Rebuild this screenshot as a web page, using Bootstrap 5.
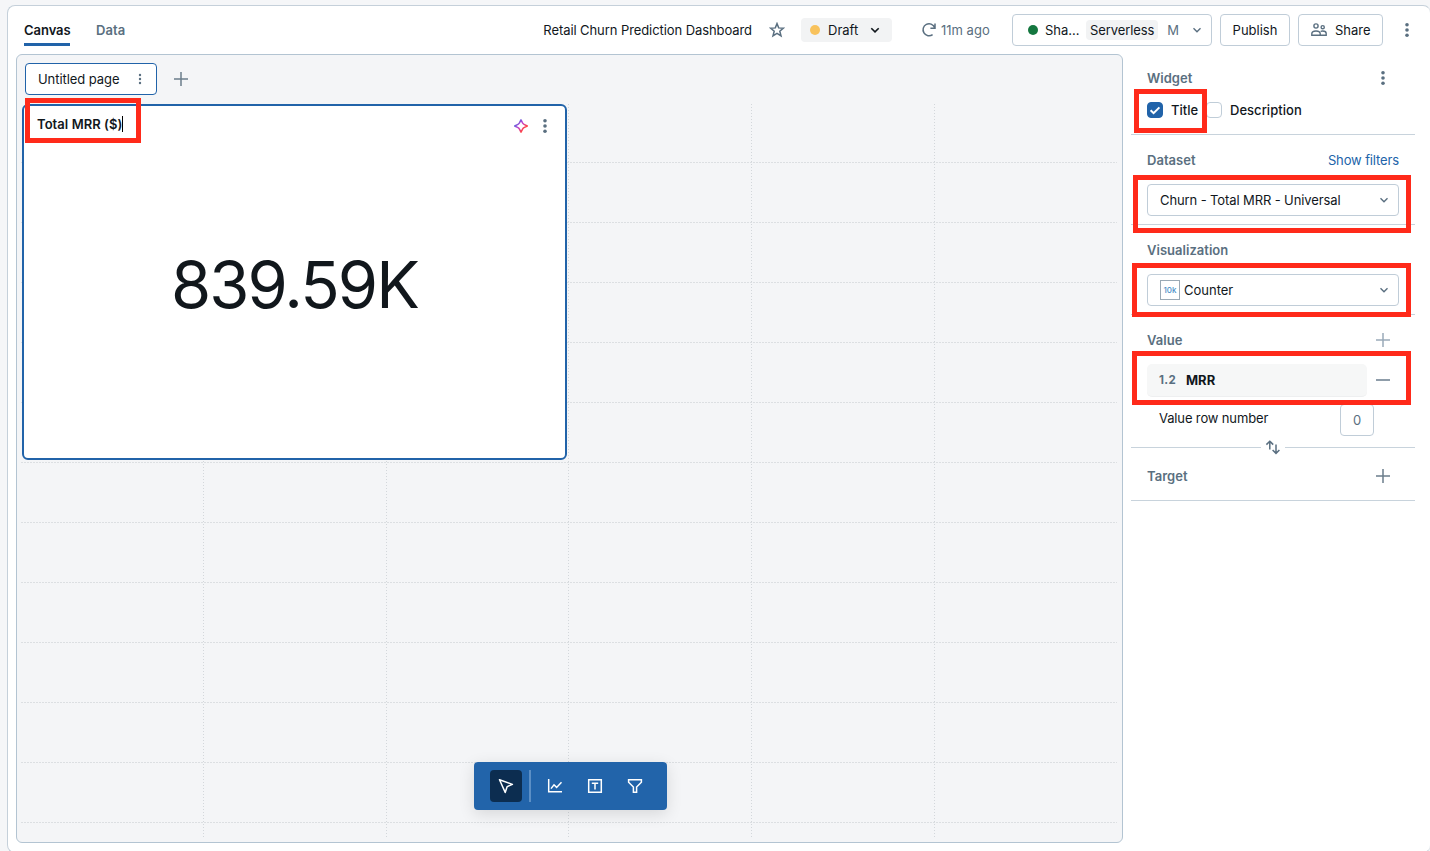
<!DOCTYPE html>
<html lang="en">
<head>
<meta charset="utf-8">
<title>Retail Churn Prediction Dashboard</title>
<meta name="viewport" content="width=device-width, initial-scale=1">
<link href="https://cdn.jsdelivr.net/npm/bootstrap@5.3.0/dist/css/bootstrap.min.css" rel="stylesheet">
<style>
:root{--ink:#11171c;--muted-ink:#5a6f80;--line:#c0cdd8;--brand:#2163a9;--red:#ff2a1a}
body{background:#f5f6f8;font-family:Inter,"Liberation Sans",sans-serif;font-size:13px;line-height:20px;color:var(--ink);height:851px;overflow:hidden;padding:5px 0 0 7px}
svg{display:block;flex:none}
.shell{width:1424px;height:848px;background:#fff;border:1px solid #c5d0da;border-right-color:#e3e8ec;border-radius:8px;padding-left:8px}
.topbar{height:48px;padding-left:8px}
.tab-link{font-weight:600;color:var(--muted-ink);height:32px;padding-top:6px;letter-spacing:.05px}
.tab-link.on{color:var(--ink);border-bottom:3px solid var(--brand);letter-spacing:-.05px}
.tone{color:var(--muted-ink)}
.pill{width:91px;height:24px;background:#f2f3f4;border-radius:4px;padding:0 11px 0 9px}
.dot{width:10px;height:10px;border-radius:50%;flex:none}
.box{height:32px;border:1px solid var(--line);border-radius:4px;background:#fff;color:var(--ink)}
.box.tone{color:var(--muted-ink)}
.tag{background:#f2f3f4;border-radius:4px;padding:0 4px}
.board{width:1107px;height:789px;background:#f4f5f7;border:1px solid #b3c4d2;border-radius:6px}
.page-tab{width:132px;height:32px;border:1px solid var(--brand);border-radius:4px;background:#fff;padding:0 11px 0 12px;margin:8px 0 0 8px}
.gridlines{left:4px;top:49px}
.widget{left:5px;top:49px;width:545px;height:356px;border:2px solid var(--brand);border-radius:6px;background:#fff}
.widget-head{padding:10px 15px 0 13px;height:32px}
.caret{width:1px;height:16px;background:#000}
.figure-num{font-size:65px;line-height:80px;margin-top:107px;letter-spacing:-1.9px}
.toolbox{left:456.500px;top:707px;width:193px;height:48px;background:#2264aa;border-radius:4px;padding:8px 0 0 16px;box-shadow:0 4px 16px rgba(0,0,0,.12)}
.tool{width:32px;height:32px;border-radius:4px}
.tool.on{background:#0c2d50}
.split{width:2px;height:32px;background:#5c8fc5;margin:0 8px 0 7px}
.side{width:284px;margin-left:8px}
.sec{border-bottom:1px solid #c8d3dc;padding:15px 16px 8px;height:90px}
.sec-label{font-weight:600;color:var(--muted-ink);letter-spacing:.03px}
.tick{width:16px;height:16px;border-radius:4px;border:1px solid var(--line);background:#fff}
.tick.on{background:var(--brand);border-color:var(--brand)}
.picker{margin-top:14px;padding:0 9px 0 12px}
.mini{width:20px;height:20px;border:1px solid #9aa9b5;font-size:8px;line-height:18px;color:#4a90c8;text-align:center;font-weight:500}
.field-chip{width:220px;height:33px;background:#f6f7f7;border-bottom:1px solid #eeeff0;border-radius:5px;padding-left:12px}
.callout{border:5px solid var(--red);z-index:5;pointer-events:none}
.t-title{letter-spacing:-.08px}
.t-page{letter-spacing:-.06px}
.t-mrr{letter-spacing:.06px;font-size:13px}
.t-show{letter-spacing:-.13px}
.t-churn{letter-spacing:-.11px}
.t-vrn{letter-spacing:-.14px}
</style>
</head>
<body>
<div class="shell">
  <header class="topbar d-flex align-items-center">
    <nav class="d-flex">
      <div class="tab-link on" style="width:46px">Canvas</div>
      <div class="tab-link" style="margin-left:26px">Data</div>
    </nav>
    <div class="d-flex align-items-center ms-auto">
      <span class="t-title text-nowrap">Retail Churn Prediction Dashboard</span>
      <svg style="margin:0 16px 0 17px" width="16" height="16" viewBox="0 0 16 16" fill="none" stroke="#5a6f80" stroke-width="1.500"><path d="M8 1.600l1.700 4.300 4.700.3-3.600 3 1.200 4.600L8 11.300l-4 2.500 1.200-4.600-3.600-3 4.700-.3z"/></svg>
      <div class="pill d-flex align-items-center"><span class="dot" style="background:#f8c25c"></span><span style="margin-left:8px">Draft</span>
        <svg class="ms-auto" width="12" height="12" viewBox="0 0 12 12" fill="none" stroke="#11171c" stroke-width="1.600"><path d="M2.300 4.200L6 7.900l3.700-3.700"/></svg></div>
      <div class="d-flex align-items-center tone" style="width:120px;padding-left:29px">
        <svg width="16" height="16" viewBox="0 0 16 16" fill="none" stroke="#5a6f80" stroke-width="1.500"><path d="M11.600 12.600A6 6 0 1 1 13.600 5.500M14 1.500v4.700H9.400"/></svg>
        <span class="text-nowrap" style="margin-left:4px">11m ago</span></div>
      <div class="box d-flex align-items-center" style="width:200px;padding:0 8px 0 15px">
        <span class="dot" style="background:#14773f"></span><span style="margin-left:7px;width:41px">Sha...</span>
        <span class="tag" style="letter-spacing:-.1px">Serverless</span><span class="tone" style="margin-left:9px">M</span>
        <svg class="ms-auto" width="12" height="12" viewBox="0 0 12 12" fill="none" stroke="#5a6f80" stroke-width="1.400"><path d="M2.500 4.300L6 7.800l3.500-3.500"/></svg></div>
      <button class="box btn p-0 ms-2" style="width:70px;font-size:13px;line-height:20px">Publish</button>
      <button class="box btn p-0 ms-2 d-flex align-items-center" style="width:85px;font-size:13px;line-height:20px">
        <svg style="margin:0 8px 0 12px" width="16" height="16" viewBox="0 0 16 16" fill="none" stroke="#5a6f80" stroke-width="1.400"><circle cx="5" cy="4" r="2.100"/><circle cx="11.700" cy="5.200" r="1.600"/><path d="M.8 13.300v-1.500C.8 10 2.600 9 5 9s4.200 1 4.200 2.800v1.500zM9.600 9.500c.6-.4 1.300-.5 2.100-.5 2 0 3.500.9 3.500 2.500v1.800H9.200"/></svg>Share</button>
      <svg style="margin:0 15px 0 16px" width="16" height="16" viewBox="0 0 16 16" fill="#5a6f80"><circle cx="8" cy="2.700" r="1.800"/><circle cx="8" cy="8" r="1.800"/><circle cx="8" cy="13.300" r="1.800"/></svg>
    </div>
  </header>

  <div class="d-flex">
    <main class="board position-relative">
      <svg class="gridlines position-absolute" width="1096" height="734" fill="none" stroke="#dcdfe2">
        <path stroke-dasharray="2 1" d="M0 58.5H1096M0 118.5H1096M0 178.5H1096M0 238.5H1096M0 298.5H1096M0 358.5H1096M0 418.5H1096M0 478.5H1096M0 538.5H1096M0 598.5H1096M0 658.5H1096M0 718.5H1096"/>
        <path stroke="#d3d7db" stroke-dasharray="1 2" d="M182.5 0V733M365.5 0V733M547.5 0V733M730.5 0V733M913.5 0V733"/>
      </svg>
      <div class="d-flex align-items-center">
        <div class="page-tab d-flex align-items-center"><span class="t-page text-nowrap">Untitled page</span>
          <svg class="ms-auto" width="10" height="12" viewBox="0 0 10 12" fill="#5a6f80"><circle cx="5" cy="2" r="1.200"/><circle cx="5" cy="6" r="1.200"/><circle cx="5" cy="10" r="1.200"/></svg></div>
        <svg style="margin:8px 0 0 16px" width="16" height="16" viewBox="0 0 16 16" stroke="#6b7d8c" stroke-width="1.500"><path d="M8 1v14M1 8h14"/></svg>
      </div>
      <section class="widget position-absolute">
        <div class="widget-head d-flex align-items-start">
          <b class="t-mrr fw-semibold text-nowrap" style="line-height:17px">Total MRR ($)</b><span class="caret"></span>
          <svg class="ms-auto" style="margin:2px 8px 0 0" width="16" height="16" viewBox="0 0 16 16" fill="none"><defs><linearGradient id="spark" x1="3" y1="4" x2="11" y2="11" gradientUnits="userSpaceOnUse"><stop stop-color="#4a6ee0"/><stop offset=".5" stop-color="#c040d0"/><stop offset="1" stop-color="#ff4646"/></linearGradient></defs><path stroke="url(#spark)" stroke-width="1.500" stroke-linejoin="round" d="M8 1.800L9.700 5.200Q10.200 6 11 6.400L14.300 8L11 9.600Q10.200 10 9.700 10.800L8 14.200L6.300 10.800Q5.800 10 5 9.600L1.700 8L5 6.400Q5.800 6 6.300 5.200Z"/></svg>
          <svg style="margin:2px -3px 0 0" width="16" height="16" viewBox="0 0 16 16" fill="#5a6f80"><circle cx="8" cy="2.700" r="1.800"/><circle cx="8" cy="8" r="1.800"/><circle cx="8" cy="13.300" r="1.800"/></svg>
        </div>
        <div class="figure-num text-center">839.59K</div>
        <div class="callout position-absolute" style="left:1px;top:-8px;width:116px;height:45px"></div>
      </section>
      <div class="toolbox position-absolute d-flex">
        <div class="tool on d-flex align-items-center justify-content-center"><svg width="16" height="16" viewBox="0 0 16 16" fill="none" stroke="#fff" stroke-width="1.500" stroke-linejoin="round"><path d="M1.500 1.700L14.400 6.400L9.200 8.600L7.200 14.400Z"/></svg></div>
        <span class="split"></span>
        <div class="tool d-flex align-items-center justify-content-center"><svg width="16" height="16" viewBox="0 0 16 16" fill="none" stroke="#fff" stroke-width="1.500"><path d="M1.700 1v12.800H15M4 10.600l3-3.800 2.600 2.600L14.500 4.200"/></svg></div>
        <div class="tool d-flex align-items-center justify-content-center ms-2"><svg width="16" height="16" viewBox="0 0 16 16" fill="none" stroke="#fff" stroke-width="1.500"><path d="M1.700 1.700h12.600v12.600H1.700zM4.800 5.200h6.400M8 5.200v6.300"/></svg></div>
        <div class="tool d-flex align-items-center justify-content-center ms-2"><svg width="16" height="16" viewBox="0 0 16 16" fill="none" stroke="#fff" stroke-width="1.500"><path d="M1.600 1.700h12.800v2.600L9.600 9v5.300H6.400V9L1.600 4.300Z"/></svg></div>
      </div>
    </main>

    <aside class="side">
      <div class="sec" style="height:81px;padding-top:14px">
        <div class="d-flex align-items-center"><span class="sec-label">Widget</span>
          <svg class="ms-auto" style="margin-right:8px" width="16" height="16" viewBox="0 0 16 16" fill="#5a6f80"><circle cx="8" cy="2.700" r="1.800"/><circle cx="8" cy="8" r="1.800"/><circle cx="8" cy="13.300" r="1.800"/></svg></div>
        <div class="d-flex align-items-center position-relative fw-medium" style="margin-top:12px">
          <span class="tick on"><svg width="14" height="14" viewBox="0 0 14 14" fill="none" stroke="#fff" stroke-width="2"><path d="M2.600 7.200L5.600 10.200L11.400 4.400"/></svg></span>
          <span style="margin-left:8px;width:35px">Title</span>
          <span class="tick"></span><span style="margin-left:8px;letter-spacing:.03px">Description</span>
          <div class="callout position-absolute" style="left:-13px;top:-11px;width:73px;height:44px"></div>
        </div>
      </div>
      <div class="sec">
        <div class="d-flex justify-content-between"><span class="sec-label">Dataset</span><span class="t-show" style="color:var(--brand)">Show filters</span></div>
        <div class="box picker d-flex align-items-center position-relative"><span class="t-churn">Churn - Total MRR - Universal</span>
          <svg class="ms-auto" width="10" height="12" viewBox="0 0 10 12" fill="none" stroke="#5a6f80" stroke-width="1.400"><path d="M1.500 4.300L5 7.800l3.500-3.500"/></svg>
          <div class="callout position-absolute" style="left:-15px;top:-10px;width:278px;height:58px"></div></div>
      </div>
      <div class="sec">
        <div class="sec-label">Visualization</div>
        <div class="box picker d-flex align-items-center position-relative"><span class="mini">10k</span><span style="margin-left:4px">Counter</span>
          <svg class="ms-auto" width="10" height="12" viewBox="0 0 10 12" fill="none" stroke="#5a6f80" stroke-width="1.400"><path d="M1.500 4.300L5 7.800l3.500-3.500"/></svg>
          <div class="callout position-absolute" style="left:-16px;top:-12px;width:279px;height:54px"></div></div>
      </div>
      <div style="padding:15px 16px 0;height:126px">
        <div class="d-flex align-items-center"><span class="sec-label">Value</span>
          <svg class="ms-auto" style="margin-right:8px" width="16" height="16" viewBox="0 0 16 16" stroke="#9aabb9" stroke-width="1.500"><path d="M8 1v14M1 8h14"/></svg></div>
        <div class="d-flex align-items-center position-relative" style="margin-top:14px">
          <div class="field-chip d-flex align-items-center"><span class="tone fw-bold" style="width:27px;font-size:11.500px;letter-spacing:.4px">1.2</span><b class="fw-bold">MRR</b></div>
          <svg style="margin:0 0 1px 8px" width="16" height="16" viewBox="0 0 16 16" stroke="#7b8c9b" stroke-width="1.700"><path d="M1 8h14"/></svg>
          <div class="callout position-absolute" style="left:-15px;top:-13px;width:279px;height:54px"></div>
        </div>
        <div class="d-flex align-items-start" style="padding:7px 9px 0 12px"><span class="t-vrn" style="padding-top:4px">Value row number</span>
          <div class="box tone d-flex align-items-center justify-content-center ms-auto me-3" style="width:34px">0</div></div>
      </div>
      <div class="d-flex align-items-center" style="height:16px;margin-top:-2px">
        <span class="flex-fill" style="height:1px;background:#c8d3dc"></span>
        <svg style="margin:0 4px" width="16" height="16" viewBox="0 0 16 16" fill="none" stroke="#5a6f80" stroke-width="1.500"><path d="M4.800 10.500V2.500M1.400 5.600L4.800 2.200L8.200 5.600M11 5.500v8.500M7.600 11L11 14.400L14.400 11"/></svg>
        <span class="flex-fill" style="height:1px;background:#c8d3dc"></span>
      </div>
      <div class="sec d-flex align-items-center" style="height:46px;padding:0 16px 4px"><span class="sec-label">Target</span>
        <svg class="ms-auto" style="margin-right:8px" width="16" height="16" viewBox="0 0 16 16" stroke="#6b7d8c" stroke-width="1.500"><path d="M8 1v14M1 8h14"/></svg></div>
    </aside>
  </div>
</div>
<script src="https://cdn.jsdelivr.net/npm/bootstrap@5.3.0/dist/js/bootstrap.bundle.min.js"></script>
</body>
</html>
